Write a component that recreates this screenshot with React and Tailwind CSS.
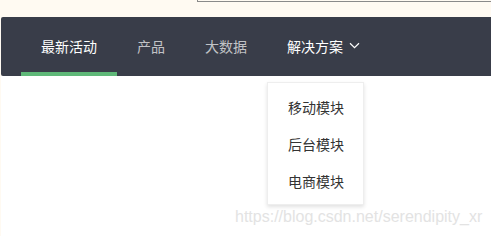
import { useState } from "react";

const navItems = [
  { label: "最新活动", active: true },
  { label: "产品" },
  { label: "大数据" },
];

const subItems = ["移动模块", "后台模块", "电商模块"];

export default function App() {
  const [open] = useState(true);

  return (
    <div
      className="relative h-[236px] w-[491px] overflow-hidden bg-[#fffaf2] pl-px"
      style={{ fontFamily: '"Noto Sans CJK SC", "Microsoft YaHei", sans-serif' }}
    >
      {/* top search box edge */}
      <div className="h-[17px]">
        <div className="ml-[196px] h-[2px] border-b border-l border-[#8a8a8a]" />
      </div>

      <div className="flex h-[59px] items-stretch rounded-l-[2px] bg-[#393d49] px-5 text-[14px]">
        {navItems.map((item) => (
          <div key={item.label} className="relative flex items-center px-5">
            <span className={item.active ? "text-white" : "text-white/70"}>{item.label}</span>
            {item.active && <div className="absolute bottom-0 left-0 h-[4px] w-full bg-[#5fb878]" />}
          </div>
        ))}
        <div className="relative flex items-center px-5">
          <span className="text-white">解决方案</span>
          <svg className="ml-[6px] mt-[-2px]" width="11" height="7" viewBox="0 0 11 7" fill="none">
            <path d="M1 1.2 L5.5 5.6 L10 1.2" stroke="#fff" strokeWidth="1.2" />
          </svg>
          {open && (
            <div className="absolute left-0 top-[65px] z-10 w-[97px] border border-[#eeeeee] bg-white pb-[4px] pt-[6px] shadow-[0_2px_4px_rgba(0,0,0,0.12)]">
              {subItems.map((s) => (
                <div key={s} className="flex h-[37px] items-center pl-[20px] text-[14px] text-[#333333]">
                  {s}
                </div>
              ))}
            </div>
          )}
        </div>
      </div>

      <div className="h-[160px] bg-white" />

      <div
        className="absolute left-[235px] top-[208px] text-[16px] leading-[18px] text-[#e3e3e3]"
        style={{ fontFamily: '"Liberation Sans", Arial, sans-serif' }}
      >
        https://blog.csdn.net/serendipity_xr
      </div>
    </div>
  );
}
